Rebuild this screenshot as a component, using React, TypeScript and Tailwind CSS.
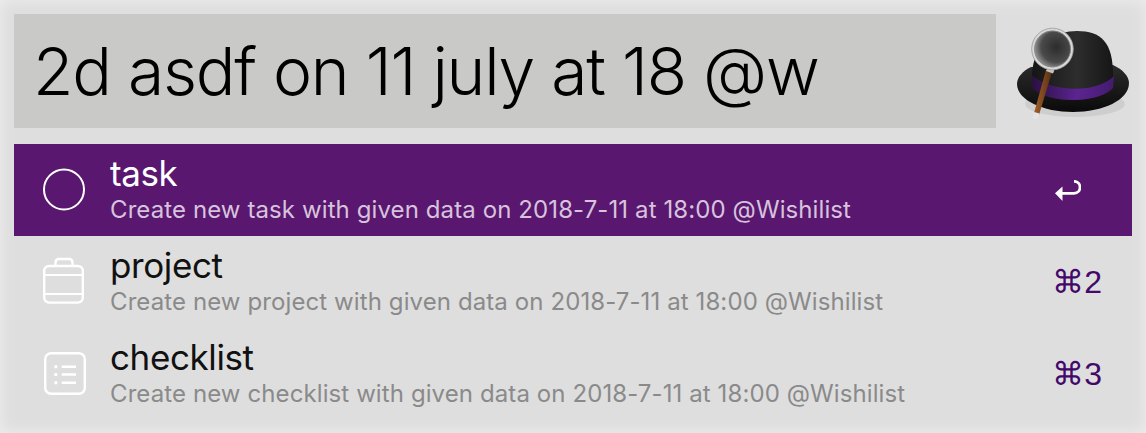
const rows = [
  { title: "task", sub: "Create new task with given data on 2018-7-11 at 18:00 @Wishilist", key: "enter", icon: "circle" },
  { title: "project", sub: "Create new project with given data on 2018-7-11 at 18:00 @Wishilist", key: "⌘2", icon: "case" },
  { title: "checklist", sub: "Create new checklist with given data on 2018-7-11 at 18:00 @Wishilist", key: "⌘3", icon: "list" },
];

function RowIcon({ name }: { name: string }) {
  if (name === "circle") {
    return (
      <svg width="44" height="44" viewBox="0 0 44 44" fill="none" stroke="#fff" strokeWidth="2" className="overflow-visible">
        <circle cx="22" cy="21.5" r="20" />
      </svg>
    );
  }
  if (name === "case") {
    return (
      <svg width="44" height="44" viewBox="0 0 44 44" fill="none" stroke="#fff" strokeWidth="2.4" className="overflow-visible">
        <path d="M13.5 6V2.5C13.5 0 15 -1 17 -1H27C29 -1 30.5 0 30.5 2.5V6" />
        <rect x="2.2" y="6" width="38.6" height="36.6" rx="5" />
        <path d="M2.2 15H41M2.2 34H41" strokeWidth="2" />
      </svg>
    );
  }
  return (
    <svg width="44" height="44" viewBox="0 0 44 44" fill="none" stroke="#fff" strokeWidth="2.4">
      <rect x="3.2" y="1.2" width="39.6" height="40.6" rx="6" />
      <path d="M12.3 14.7H15.3M12.3 22.5H15.3M12.3 30.7H15.3" strokeWidth="3" />
      <path d="M19.7 14.7H34M19.7 22.5H34M19.7 30.7H34" strokeWidth="2.6" />
    </svg>
  );
}

function Hat() {
  return (
    <svg width="112" height="92" viewBox="0 0 112 92" className="overflow-visible">
      <defs>
        <linearGradient id="crown" x1="0" y1="0" x2="1" y2="0">
          <stop offset="0" stopColor="#151515" />
          <stop offset="0.55" stopColor="#2c2d2c" />
          <stop offset="1" stopColor="#161616" />
        </linearGradient>
        <linearGradient id="brim" x1="0" y1="0" x2="0" y2="1">
          <stop offset="0" stopColor="#2b2b2b" />
          <stop offset="1" stopColor="#0a0a0a" />
        </linearGradient>
        <linearGradient id="band" x1="0" y1="0" x2="1" y2="0">
          <stop offset="0" stopColor="#2a1040" />
          <stop offset="0.55" stopColor="#5c2492" />
          <stop offset="1" stopColor="#431b6e" />
        </linearGradient>
        <radialGradient id="glass" cx="0.6" cy="0.45" r="0.6">
          <stop offset="0" stopColor="#2c2c2c" />
          <stop offset="0.65" stopColor="#4a4a4a" />
          <stop offset="1" stopColor="#a0a0a0" />
        </radialGradient>
        <linearGradient id="wood" x1="0" y1="0" x2="1" y2="0">
          <stop offset="0" stopColor="#a2602a" />
          <stop offset="1" stopColor="#5a2f12" />
        </linearGradient>
      </defs>
      <ellipse cx="58" cy="76" rx="50" ry="13" fill="#000" opacity="0.07" />
      <path d="M0 56C0 49 6 43 14 39L96 37C105 41 112 48 112 55C112 72 86 84 56 84C26 84 0 72 0 56Z" fill="url(#brim)" />
      <path d="M15 47C16 14 40 3 60 3C84 3 96 14 96 47L96 60C80 76 30 76 15 60Z" fill="url(#crown)" />
      <path d="M15 47C32 64 80 66 97 48L96 60C82 76 30 76 15 60Z" fill="url(#band)" />
      <path d="M29 42L17 85L22 87L35 44Z" fill="url(#wood)" />
      <path d="M17 84L15.5 90C17 91.5 20 91.5 21 90L22.5 85.5Z" fill="#e4e4e4" />
      <path d="M29 43L36 45.5L39 38L32 36Z" fill="#c4c4c4" />
      <circle cx="35.5" cy="21" r="19.5" fill="url(#glass)" stroke="#d8d8d8" strokeWidth="2.6" />
      <circle cx="35.5" cy="21" r="20.8" fill="none" stroke="#999" strokeWidth="0.8" />
      <circle cx="35.5" cy="21" r="18" fill="none" stroke="#888" strokeWidth="0.8" />
    </svg>
  );
}

export default function App() {
  return (
    <div className="w-[1146px] h-[433px] overflow-hidden bg-[#dedede] p-[14px] font-['Inter',sans-serif] shadow-[inset_0_0_16px_#eeeeee]">
      <div className="flex items-start">
        <div className="w-[982px] h-[114px] bg-[#c9c9c7] pl-[19px] flex items-center text-[66px] leading-none font-light tracking-[-1.27px] text-black whitespace-nowrap">
          2d asdf on 11 july at 18 @w
        </div>
        <div className="ml-[21px] mt-[14px]">
          <Hat />
        </div>
      </div>
      <div className="mt-4">
        {rows.map((row, i) => (
          <div key={row.title} className={`h-[92px] flex items-center pl-[28px] pr-[30px] ${i === 0 ? "bg-[#59176f]" : ""}`}>
            <div className="w-[44px] h-[44px] shrink-0">
              <RowIcon name={row.icon} />
            </div>
            <div className="ml-[24px] flex-1 pb-[3px]">
              <div className={`mb-[4px] text-[35px] leading-[38px] tracking-[-0.4px] ${i === 0 ? "text-white" : "text-[#111]"}`}>{row.title}</div>
              <div className={`text-[24px] leading-[28px] tracking-[0.1px] ${i === 0 ? "text-[#d7c3dd]" : "text-[#8a8a8a]"}`}>{row.sub}</div>
            </div>
            {row.key === "enter" ? (
              <svg width="26" height="22" viewBox="0 0 26 22" fill="none" className="mr-[21px] mt-[2px]">
                <path d="M7 13.3H19C27 13.3 27 1.3 19 1.3" stroke="#fff" strokeWidth="2.7" />
                <path d="M0 13.3L7.5 6.5V21Z" fill="#fff" />
              </svg>
            ) : (
              <div className="text-[32px] leading-none text-[#43086a] font-['Liberation_Sans',sans-serif]">{row.key}</div>
            )}
          </div>
        ))}
      </div>
    </div>
  );
}
